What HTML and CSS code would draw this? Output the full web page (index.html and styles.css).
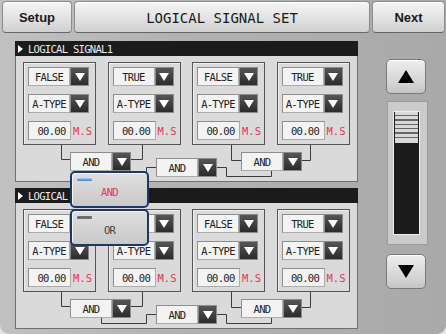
FILE: index.html
```html
<!DOCTYPE html>
<html lang="en">
<head>
    <meta charset="UTF-8">
    <meta name="viewport" content="width=device-width, initial-scale=1.0">
    <title>Logical Signal Set</title>
    <link rel="stylesheet" href="styles.css">
</head>
<body>
<div class="screen">

    <header class="topbar">
        <div class="btn btn-side setup">Setup</div>
        <div class="btn title">LOGICAL SIGNAL SET</div>
        <div class="btn btn-side next">Next</div>
    </header>

    <main class="main">
        <div class="panels">

            <section class="panel">
                <div class="panel-title"><span class="arrow"></span>LOGICAL SIGNAL1</div>
                <div class="panel-body">
                    <div class="cards">
                        <div class="card">
                            <div class="row"><span class="field">FALSE</span><span class="drop"></span></div>
                            <div class="row"><span class="field">A-TYPE</span><span class="drop"></span></div>
                            <div class="row"><span class="field time">00.00</span><span class="unit">M.S</span></div>
                        </div>
                        <div class="card">
                            <div class="row"><span class="field">TRUE</span><span class="drop"></span></div>
                            <div class="row"><span class="field">A-TYPE</span><span class="drop"></span></div>
                            <div class="row"><span class="field time">00.00</span><span class="unit">M.S</span></div>
                        </div>
                        <div class="card">
                            <div class="row"><span class="field">FALSE</span><span class="drop"></span></div>
                            <div class="row"><span class="field">A-TYPE</span><span class="drop"></span></div>
                            <div class="row"><span class="field time">00.00</span><span class="unit">M.S</span></div>
                        </div>
                        <div class="card">
                            <div class="row"><span class="field">TRUE</span><span class="drop"></span></div>
                            <div class="row"><span class="field">A-TYPE</span><span class="drop"></span></div>
                            <div class="row"><span class="field time">00.00</span><span class="unit">M.S</span></div>
                        </div>
                    </div>
                    <div class="wiring">
                        <svg class="wires" width="341" height="36" viewBox="0 0 341 36">
                            <path d="M45.5 0 V14.5 H54"/>
                            <path d="M115 14.5 H126.5 V0"/>
                            <path d="M85.5 26 V31.5 H130.5 V22.5 H140"/>
                            <path d="M201 22.5 H210.5 V31.5 H255.5 V26"/>
                            <path d="M215.5 0 V15.5 H225"/>
                            <path d="M286 15.5 H294.5 V0"/>
                        </svg>
                        <div class="gate g1"><span class="field">AND</span><span class="drop"></span></div>
                        <div class="gate g2"><span class="field">AND</span><span class="drop"></span></div>
                        <div class="gate g3"><span class="field">AND</span><span class="drop"></span></div>
                    </div>
                </div>
            </section>

            <section class="panel">
                <div class="panel-title"><span class="arrow"></span>LOGICAL SIGNAL2</div>
                <div class="panel-body">
                    <div class="cards">
                        <div class="card">
                            <div class="row"><span class="field">FALSE</span><span class="drop"></span></div>
                            <div class="row"><span class="field">A-TYPE</span><span class="drop"></span></div>
                            <div class="row"><span class="field time">00.00</span><span class="unit">M.S</span></div>
                        </div>
                        <div class="card">
                            <div class="row"><span class="field">TRUE</span><span class="drop"></span></div>
                            <div class="row"><span class="field">A-TYPE</span><span class="drop"></span></div>
                            <div class="row"><span class="field time">00.00</span><span class="unit">M.S</span></div>
                        </div>
                        <div class="card">
                            <div class="row"><span class="field">FALSE</span><span class="drop"></span></div>
                            <div class="row"><span class="field">A-TYPE</span><span class="drop"></span></div>
                            <div class="row"><span class="field time">00.00</span><span class="unit">M.S</span></div>
                        </div>
                        <div class="card">
                            <div class="row"><span class="field">TRUE</span><span class="drop"></span></div>
                            <div class="row"><span class="field">A-TYPE</span><span class="drop"></span></div>
                            <div class="row"><span class="field time">00.00</span><span class="unit">M.S</span></div>
                        </div>
                    </div>
                    <div class="wiring">
                        <svg class="wires" width="341" height="36" viewBox="0 0 341 36">
                            <path d="M45.5 0 V14.5 H54"/>
                            <path d="M115 14.5 H126.5 V0"/>
                            <path d="M85.5 26 V31.5 H130.5 V22.5 H140"/>
                            <path d="M201 22.5 H210.5 V31.5 H255.5 V26"/>
                            <path d="M215.5 0 V15.5 H225"/>
                            <path d="M286 15.5 H294.5 V0"/>
                        </svg>
                        <div class="gate g1"><span class="field">AND</span><span class="drop"></span></div>
                        <div class="gate g2"><span class="field">AND</span><span class="drop"></span></div>
                        <div class="gate g3"><span class="field">AND</span><span class="drop"></span></div>
                    </div>
                </div>
            </section>

        </div>

        <aside class="scroll">
            <div class="sbtn"><span class="tri-up"></span></div>
            <div class="track">
                <div class="well"><div class="thumb"></div></div>
            </div>
            <div class="sbtn down"><span class="tri-down"></span></div>
        </aside>
    </main>

    <!-- open gate menu -->
    <div class="popup">
        <div class="opt active"><i></i>AND</div>
        <div class="opt"><i></i>OR</div>
    </div>

</div>
</body>
</html>
```

FILE: styles.css
```css
* {
    box-sizing: border-box;
}

body {
    margin: 0;
    background: #e6e6e6;
    font-family: "DejaVu Sans Mono", monospace;
}

.screen {
    position: relative;
    width: 446px;
    height: 334px;
    overflow: hidden;
    background: linear-gradient(to right, #c1c1c1, #b2b2b2 40%, #a9a9a9);
    border-radius: 0 0 9px 9px;
}

/* top bar */
.topbar {
    display: flex;
    gap: 2px;
    height: 33px;
    padding: 1px 1px 0 2px;
}

.btn {
    height: 32px;
    display: flex;
    align-items: center;
    justify-content: center;
    color: #1a1a1a;
    border: 1px solid #8c8c8c;
    border-bottom-color: #666;
    border-radius: 4px;
    background: linear-gradient(#f5f5f5, #e0e0e0 60%, #cfcfcf);
    box-shadow: inset 0 1px 0 #fff;
}

.btn-side {
    font-family: "Liberation Sans", Arial, sans-serif;
    font-weight: bold;
    font-size: 13px;
}

.setup {
    width: 70px;
}

.next {
    width: 73px;
}

.title {
    flex: 1;
    font-size: 14px;
    padding-top: 1px;
}

/* main area */
.main {
    display: flex;
}

.panels {
    width: 343px;
    margin: 8px 0 0 15px;
    display: flex;
    flex-direction: column;
    gap: 6px;
}

.panel-title {
    height: 15px;
    display: flex;
    align-items: center;
    padding-left: 3px;
    background: #1b1b1b;
    color: #ececec;
    font-size: 10.5px;
    letter-spacing: -0.7px;
}

.arrow {
    width: 0;
    height: 0;
    border-top: 4px solid transparent;
    border-bottom: 4px solid transparent;
    border-left: 5px solid #fff;
    margin-right: 5px;
}

.panel-body {
    height: 126px;
    padding-top: 6px;
    background: #dadada;
    border: 1px solid #6f6f6f;
    border-top: 0;
}

.cards {
    display: flex;
    gap: 11.5px;
    padding-left: 7px;
}

.card {
    width: 73px;
    height: 83px;
    padding: 4px 0 0 4px;
    display: flex;
    flex-direction: column;
    gap: 8px;
    border: 1px solid #555;
    box-shadow: inset 1px 1px 0 #efefef;
}

.row {
    display: flex;
    align-items: center;
    height: 19px;
}

.field {
    width: 42px;
    height: 19px;
    display: flex;
    align-items: center;
    justify-content: center;
    background: #f3f3f3;
    color: #222;
    border: 1px solid #acacac;
    border-top-color: #8e8e8e;
    border-left-color: #8e8e8e;
    font-size: 10.5px;
    letter-spacing: -0.7px;
}

.field.time {
    width: 43px;
    padding-left: 4px;
}

.drop {
    width: 19px;
    height: 19px;
    display: flex;
    align-items: center;
    justify-content: center;
    background: linear-gradient(#565656, #2b2b2b);
    border: 1px solid #8a8a8a;
}

.drop::after {
    content: "";
    border-left: 5.5px solid transparent;
    border-right: 5.5px solid transparent;
    border-top: 8px solid #fff;
}

.unit {
    margin-left: 2px;
    color: #e6374f;
    font-size: 10.5px;
}

/* gate wiring under the cards */
.wiring {
    position: relative;
    height: 36px;
    display: flex;
    align-items: flex-start;
}

.wires {
    position: absolute;
    left: 0;
    top: 0;
}

.wires path {
    fill: none;
    stroke: #3c3c3c;
    stroke-width: 1;
}

.gate {
    position: relative;
    display: flex;
}

.g1 {
    margin: 7px 0 0 54px;
}

.g2 {
    margin: 13px 0 0 25px;
}

.g3 {
    margin: 7px 0 0 24px;
}

/* scroll column */
.scroll {
    width: 42px;
    margin: 26px 0 0 28px;
    display: flex;
    flex-direction: column;
}

.sbtn {
    width: 40px;
    height: 35px;
    display: flex;
    align-items: center;
    justify-content: center;
    border: 1px solid #7a7a7a;
    border-radius: 5px;
    background: linear-gradient(#ededed, #d4d4d4 70%, #c4c4c4);
    box-shadow: inset 0 1px 0 #fff;
}

.sbtn.down {
    margin-top: 9px;
}

.tri-up {
    border-left: 8px solid transparent;
    border-right: 8px solid transparent;
    border-bottom: 13px solid #000;
}

.tri-down {
    border-left: 8px solid transparent;
    border-right: 8px solid transparent;
    border-top: 13px solid #000;
}

.track {
    width: 41px;
    height: 144px;
    margin: 7px 0 0 1px;
    padding: 9px 7px 9px 5px;
    background: #cbcbcb;
    border: 1px solid #9c9c9c;
}

.well {
    height: 100%;
    background: #1c1c1c;
    border: 1px solid #eeeeee;
}

.thumb {
    height: 31px;
    margin: 0 1px;
    background: repeating-linear-gradient(#d8d8d8 0, #d8d8d8 3px, #666 3px, #666 4.33px);
    border-bottom: 2px solid #d8d8d8;
}

/* open menu */
.popup {
    position: absolute;
    left: 70px;
    top: 171px;
    width: 79px;
    display: flex;
    flex-direction: column;
    gap: 1px;
}

.opt {
    position: relative;
    height: 37px;
    padding-top: 4px;
    display: flex;
    align-items: center;
    justify-content: center;
    color: #444;
    font-size: 10.5px;
    letter-spacing: -0.7px;
    border: 2px solid #1d3867;
    border-radius: 5px;
    background: linear-gradient(#e0e0e0, #c8c8c8);
    box-shadow: inset 1px 1px 0 #f4f4f4;
}

.opt i {
    position: absolute;
    left: 5px;
    top: 5px;
    width: 15px;
    height: 3px;
    border-radius: 1px;
    background: #6d6d6d;
}

.opt.active {
    color: #e6374f;
}

.opt.active i {
    background: linear-gradient(#a6d0f2, #3f7cbc);
}
```
